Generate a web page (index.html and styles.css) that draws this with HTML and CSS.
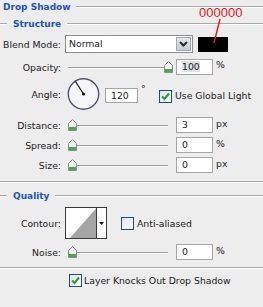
FILE: index.html
```html
<!DOCTYPE html>
<html lang="en">
<head>
    <meta charset="UTF-8">
    <title>Drop Shadow</title>
    <link rel="stylesheet" href="styles.css">
</head>
<body>
    <div class="panel">
        <div class="legend top"><span>Drop Shadow</span><i class="rule"></i></div>
        <div class="legend sub"><i class="rule lead"></i><span>Structure</span><i class="rule"></i></div>

        <div class="row blend">
            <span class="lbl">Blend Mode:</span>
            <div class="select">
                <span class="value">Normal</span>
                <span class="drop"><svg width="9" height="6" viewBox="0 0 9 6"><path d="M1 1 L4.5 4.5 L8 1" fill="none" stroke="#2a2a2a" stroke-width="2"/></svg></span>
            </div>
            <div class="swatch"></div>
        </div>

        <div class="row field opacity">
            <span class="lbl">Opacity:</span>
            <div class="slider end">
                <svg class="thumb" width="9" height="12" viewBox="0 0 9 12"><path d="M0.5 4.5 L4.5 0.5 L8.5 4.5 V11.5 H0.5 Z" fill="#f2f2f2" stroke="#8c8c8c"/><rect x="1" y="8" width="7" height="3" fill="#48a94c"/></svg>
            </div>
            <div class="num"><span class="sel">100</span></div>
            <span class="unit">%</span>
        </div>

        <div class="row angle">
            <span class="lbl">Angle:</span>
            <svg class="dial" width="33" height="32" viewBox="0 0 33 32">
                <circle cx="16.5" cy="16" r="15.2" fill="#f6f6f8" stroke="#4e5470" stroke-width="1.4"/>
                <line x1="16.5" y1="16" x2="8.5" y2="3.5" stroke="#111" stroke-width="1.2"/>
                <circle cx="16.5" cy="16" r="1.6" fill="#111"/>
            </svg>
            <div class="num short">120</div>
            <span class="deg">°</span>
            <span class="check on"><svg width="13" height="13" viewBox="0 0 13 13"><path d="M3 6.5 L5.5 9 L10 3.5" fill="none" stroke="#21a121" stroke-width="2"/></svg></span>
            <span class="check-label">Use Global Light</span>
        </div>

        <div class="row field distance">
            <span class="lbl">Distance:</span>
            <div class="slider">
                <svg class="thumb" width="9" height="12" viewBox="0 0 9 12"><path d="M0.5 4.5 L4.5 0.5 L8.5 4.5 V11.5 H0.5 Z" fill="#f2f2f2" stroke="#8c8c8c"/><rect x="1" y="8" width="7" height="3" fill="#48a94c"/></svg>
            </div>
            <div class="num">3</div>
            <span class="unit">px</span>
        </div>

        <div class="row field">
            <span class="lbl">Spread:</span>
            <div class="slider">
                <svg class="thumb" width="9" height="12" viewBox="0 0 9 12"><path d="M0.5 4.5 L4.5 0.5 L8.5 4.5 V11.5 H0.5 Z" fill="#f2f2f2" stroke="#8c8c8c"/><rect x="1" y="8" width="7" height="3" fill="#48a94c"/></svg>
            </div>
            <div class="num">0</div>
            <span class="unit">%</span>
        </div>

        <div class="row field">
            <span class="lbl">Size:</span>
            <div class="slider">
                <svg class="thumb" width="9" height="12" viewBox="0 0 9 12"><path d="M0.5 4.5 L4.5 0.5 L8.5 4.5 V11.5 H0.5 Z" fill="#f2f2f2" stroke="#8c8c8c"/><rect x="1" y="8" width="7" height="3" fill="#48a94c"/></svg>
            </div>
            <div class="num">0</div>
            <span class="unit">px</span>
        </div>

        <i class="rule divider first"></i>

        <div class="legend sub quality"><i class="rule lead"></i><span>Quality</span><i class="rule"></i></div>

        <div class="row contour-row">
            <span class="lbl">Contour:</span>
            <div class="contour">
                <svg class="curve" width="30" height="30" viewBox="0 0 30 30"><polygon points="4,30 30,0.5 30,30" fill="#a5a5a5"/></svg>
                <span class="arrow"><svg width="5" height="3" viewBox="0 0 5 3"><polygon points="0,0 5,0 2.5,3" fill="#111"/></svg></span>
            </div>
            <span class="check"></span>
            <span class="check-label">Anti-aliased</span>
        </div>

        <div class="row field noise">
            <span class="lbl">Noise:</span>
            <div class="slider">
                <svg class="thumb" width="9" height="12" viewBox="0 0 9 12"><path d="M0.5 4.5 L4.5 0.5 L8.5 4.5 V11.5 H0.5 Z" fill="#f2f2f2" stroke="#8c8c8c"/><rect x="1" y="8" width="7" height="3" fill="#48a94c"/></svg>
            </div>
            <div class="num">0</div>
            <span class="unit">%</span>
        </div>

        <i class="rule divider second"></i>

        <div class="row knockout">
            <span class="check on"><svg width="13" height="13" viewBox="0 0 13 13"><path d="M3 6.5 L5.5 9 L10 3.5" fill="none" stroke="#21a121" stroke-width="2"/></svg></span>
            <span class="check-label">Layer Knocks Out Drop Shadow</span>
        </div>

        <!-- colour callout drawn over the panel -->
        <span class="note">000000</span>
        <svg class="leader" width="20" height="30" viewBox="0 0 20 30"><line x1="12" y1="2" x2="6" y2="26" stroke="#e8171c" stroke-width="1.4"/></svg>
    </div>
</body>
</html>
```

FILE: styles.css
```css
body {
    margin: 0;
    background-color: #ededed;
    font-family: "DejaVu Sans", Tahoma, sans-serif;
    font-size: 9.3px;
    color: #222;
}

.panel {
    position: relative;
    width: 263px;
    height: 307px;
    overflow: hidden;
}

.rule {
    display: block;
    height: 0;
    border-top: 1px solid #a9a9a9;
    border-bottom: 1px solid #fff;
}

.legend {
    display: flex;
    align-items: center;
    height: 14px;
    color: #2353b9;
    font-weight: bold;
    font-size: 9px;
}

.legend .rule {
    flex: 1;
}

.legend.top {
    padding-left: 3px;
}

.legend.top span {
    margin-right: 5px;
}

.legend.sub {
    margin-top: 3px;
}

.legend .rule.lead {
    flex: none;
    width: 7px;
}

.legend.sub span {
    margin: 0 6px;
}

.row {
    display: flex;
    align-items: center;
}

.lbl {
    flex: none;
    width: 61px;
    text-align: right;
}

/* blend mode */
.blend {
    height: 20px;
    margin-top: 3px;
}

.select {
    display: flex;
    align-items: stretch;
    box-sizing: border-box;
    width: 128px;
    height: 18px;
    margin-left: 4px;
    background: #fff;
    border: 1px solid #8e8e8e;
}

.select .value {
    flex: 1;
    padding-left: 3px;
    line-height: 16px;
}

.select .drop {
    display: flex;
    align-items: center;
    justify-content: center;
    width: 15px;
    margin: 1px;
    background: linear-gradient(#e4e6ec, #c9ccd6);
    border: 1px solid #a3a8b6;
    box-sizing: border-box;
}

.swatch {
    width: 30px;
    height: 15px;
    margin-left: 5px;
    background: #000;
}

/* slider rows */
.field {
    height: 16px;
    margin-top: 4px;
}

.opacity {
    margin-top: 4px;
    height: 18px;
}

.distance {
    margin-top: 7px;
}

.slider {
    display: flex;
    align-items: center;
    width: 105px;
    height: 13px;
    margin-left: 7px;
    background:
        linear-gradient(#9c9c9c, #9c9c9c) 0 6px / 100px 1px no-repeat,
        linear-gradient(#fff, #fff) 0 7px / 100px 1px no-repeat;
}

.slider.end {
    justify-content: flex-end;
}

.thumb {
    display: block;
}

.num {
    box-sizing: border-box;
    width: 37px;
    height: 16px;
    margin-left: 3px;
    padding-left: 5px;
    line-height: 14px;
    background: #fff;
    border: 1px solid #a6a6a6;
}

.num .sel {
    background: #dde1e8;
}

.unit {
    align-self: flex-start;
    margin-left: 3px;
    margin-top: 2px;
    line-height: 10px;
}

/* angle */
.angle {
    height: 32px;
    margin-top: 2px;
}

.dial {
    display: block;
    margin-left: 6px;
}

.num.short {
    width: 33px;
    height: 15px;
    margin-left: 5px;
    margin-top: 3px;
}

.deg {
    align-self: flex-start;
    margin-top: 5px;
    margin-left: 3px;
    width: 18px;
}

.check {
    flex: none;
    display: block;
    box-sizing: border-box;
    width: 13px;
    height: 13px;
    border: 1px solid #1f4f7e;
    background: linear-gradient(135deg, #dde3ea, #fff);
}

.check svg {
    display: block;
    margin: -1px;
}

.angle .check {
    margin-top: 4px;
}

.check-label {
    margin-left: 3px;
}

.angle .check-label {
    margin-top: 3px;
}

/* quality */
.divider.first {
    margin-top: 8px;
}

.legend.quality {
    margin-top: 6px;
}

.contour-row {
    height: 32px;
    margin-top: 4px;
}

.contour {
    display: flex;
    box-sizing: border-box;
    width: 42px;
    height: 32px;
    margin-left: 4px;
    background: #fff;
    border: 1px solid #3a3a3a;
}

.curve {
    display: block;
}

.contour .arrow {
    flex: 1;
    display: flex;
    align-items: center;
    justify-content: center;
    border-left: 1px solid #3a3a3a;
}

.contour-row .check {
    margin-left: 14px;
}

.noise {
    margin-top: 5px;
}

.divider.second {
    margin-top: 7px;
}

.knockout {
    height: 14px;
    margin-top: 4px;
    padding-left: 69px;
}

.knockout .check-label {
    margin-left: 2px;
}

/* callout */
.note {
    position: absolute;
    left: 199px;
    top: 5px;
    font-family: "Liberation Sans", Arial, sans-serif;
    font-size: 13px;
    color: #e8171c;
}

.leader {
    position: absolute;
    left: 208px;
    top: 17px;
}
```
